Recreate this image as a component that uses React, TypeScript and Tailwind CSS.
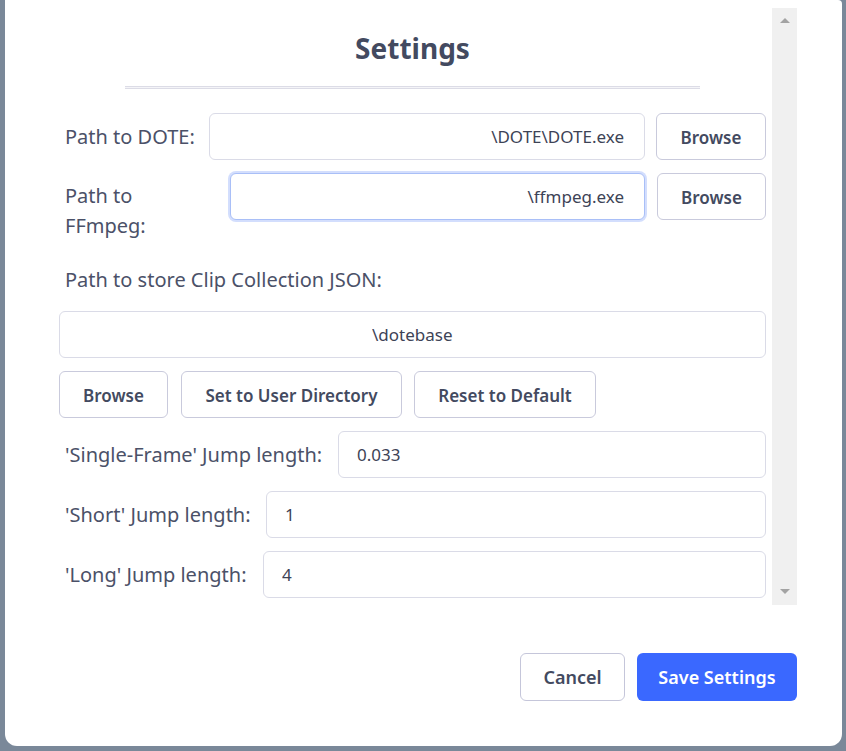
import React from "react";

const btn =
  "h-[47px] rounded-[6px] border border-[#c9cadc] bg-white text-[17px] font-semibold text-[#434a60] flex items-center justify-center pt-[2px]";
const inp =
  "h-[47px] rounded-[6px] border border-[#dadbe7] bg-white text-[17px] text-[#3d4356] outline-none";

export default function App() {
  return (
    <div className="min-h-[751px] bg-[#7a8899] pl-[5px] font-['Noto_Sans',sans-serif]">
      <div className="w-[837px] h-[746px] bg-white rounded-b-[12px] rounded-tr-[4px] flex flex-col pt-[8px]">
        <div className="flex pl-[40px]">
          <div className="w-[727px] h-[597px] pl-[14px] pr-[6px] pt-[22px] text-[20px] text-[#4b5168]">
            <h1 className="text-center text-[28px] leading-[36px] font-bold text-[#434a60]">Settings</h1>
            <div className="mx-auto mt-[20px] w-[575px] h-[3px] border-t border-b border-[#dcdce6] bg-[#f4f4f8]" />

            <div className="mt-[24px] flex items-center">
              <div className="w-[150px] pl-[6px] leading-[30px]">Path to DOTE:</div>
              <input readOnly value="\DOTE\DOTE.exe" className={`${inp} w-[436px] text-right pr-[20px]`} />
              <button className={`${btn} ml-[11px] w-[110px]`}>Browse</button>
            </div>

            <div className="mt-[13px] flex items-start">
              <div className="w-[171px] pl-[6px] leading-[30px] mt-[8px]">
                <div>Path to</div>
                <div>FFmpeg:</div>
              </div>
              <input
                readOnly
                value="\ffmpeg.exe"
                className="h-[47px] w-[415px] rounded-[6px] border border-[#a9bff7] shadow-[0_0_0_2px_#d3defd] bg-white text-[17px] text-[#3d4356] outline-none text-right pr-[20px]"
              />
              <button className={`${btn} ml-[12px] w-[109px]`}>Browse</button>
            </div>

            <div className="mt-[24px] pl-[6px] leading-[30px]">Path to store Clip Collection JSON:</div>
            <input readOnly value="\dotebase" className={`${inp} mt-[16px] w-full pl-[312px] block`} />

            <div className="mt-[13px] flex">
              <button className={`${btn} w-[109px]`}>Browse</button>
              <button className={`${btn} ml-[13px] w-[221px]`}>Set to User Directory</button>
              <button className={`${btn} ml-[12px] w-[182px]`}>Reset to Default</button>
            </div>

            <div className="mt-[13px] flex items-center">
              <div className="w-[279px] pl-[6px] leading-[30px]">'Single-Frame' Jump length:</div>
              <input readOnly value="0.033" className={`${inp} flex-1 pl-[18px]`} />
            </div>
            <div className="mt-[13px] flex items-center">
              <div className="w-[207px] pl-[6px] leading-[30px]">'Short' Jump length:</div>
              <input readOnly value="1" className={`${inp} flex-1 pl-[18px]`} />
            </div>
            <div className="mt-[13px] flex items-center">
              <div className="w-[204px] pl-[6px] leading-[30px]">'Long' Jump length:</div>
              <input readOnly value="4" className={`${inp} flex-1 pl-[18px]`} />
            </div>
          </div>

          <div className="w-[25px] h-[597px] bg-[#f0f0f0] flex flex-col justify-between items-center pt-[10px] pb-[11px]">
            <div className="w-0 h-0 border-l-[5px] border-r-[5px] border-b-[5px] border-l-transparent border-r-transparent border-b-[#a3a3a3]" />
            <div className="w-0 h-0 border-l-[5px] border-r-[5px] border-t-[5px] border-l-transparent border-r-transparent border-t-[#a3a3a3]" />
          </div>
        </div>

        <div className="mt-[48px] flex justify-end pr-[45px]">
          <button className="h-[48px] w-[105px] rounded-[6px] border border-[#c5c6da] bg-white text-[18px] font-semibold text-[#434a60]">
            Cancel
          </button>
          <button className="ml-[12px] h-[48px] w-[160px] rounded-[6px] bg-[#3a68ff] text-[18px] font-semibold text-white">
            Save Settings
          </button>
        </div>
      </div>
    </div>
  );
}
